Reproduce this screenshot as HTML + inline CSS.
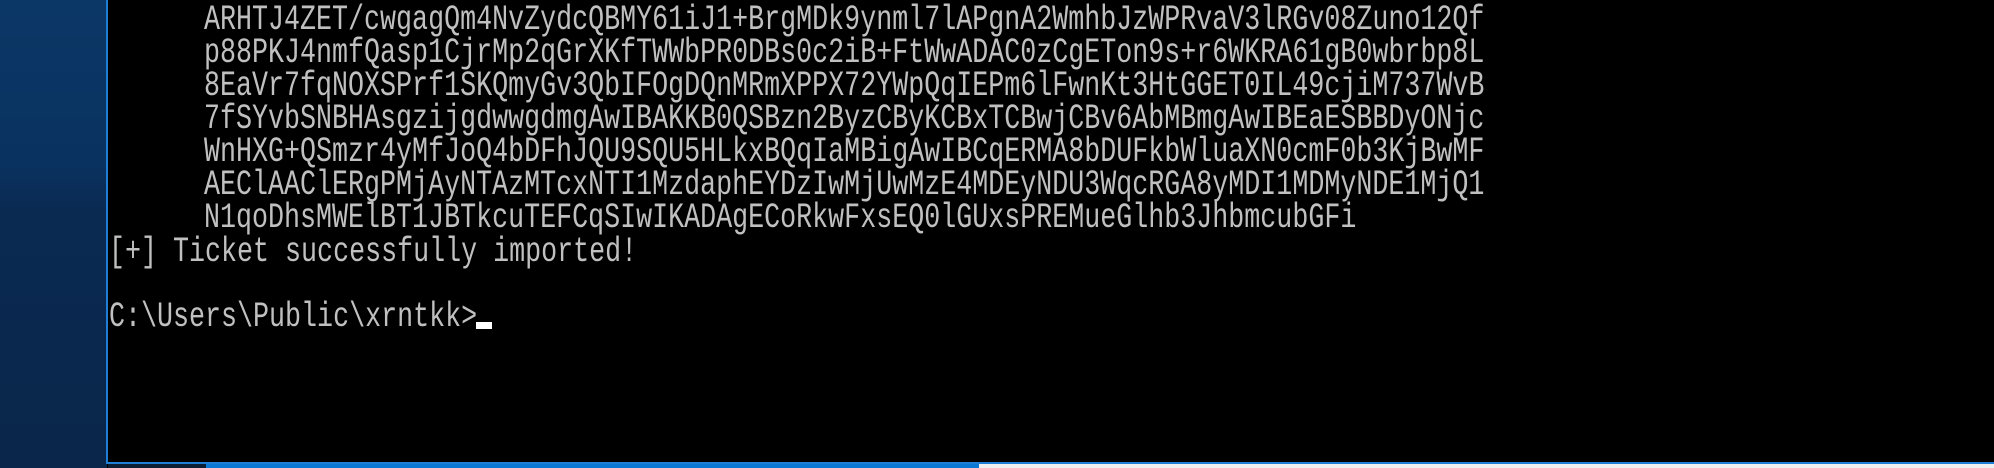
<!DOCTYPE html>
<html><head><meta charset="utf-8"><style>
html,body{margin:0;padding:0;}
body{width:1994px;height:468px;position:relative;overflow:hidden;background:#000;}
#desk{position:absolute;left:0;top:0;width:107px;height:468px;background:linear-gradient(180deg,#0b3766 0%,#0a3260 35%,#0a2a52 45%,#0a264a 100%);}
#win{position:absolute;left:106px;top:-2px;width:1890px;height:464px;background:#000;border-left:2px solid #1f7fd6;border-bottom:2px solid #1f7fd6;}
#strip1{position:absolute;left:108px;top:464px;width:98px;height:4px;background:#0b1e33;}
#strip2{position:absolute;left:206px;top:464px;width:773px;height:4px;background:#0a78d4;}
#strip3{position:absolute;left:979px;top:464px;width:1015px;height:4px;background:#f0f0f0;}
.l{position:absolute;white-space:pre;color:#c0c0c0;font-family:"Liberation Mono",monospace;font-size:35px;line-height:35px;transform:scaleX(0.762);transform-origin:0 0;}
#cur{position:absolute;left:476px;top:322px;width:16px;height:7px;background:#fff;}
</style></head><body>
<div id="desk"></div>
<div id="win"></div>
<div id="strip1"></div><div id="strip2"></div><div id="strip3"></div>
<div class="l" style="left:204px;top:3px">ARHTJ4ZET/cwgagQm4NvZydcQBMY61iJ1+BrgMDk9ynml7lAPgnA2WmhbJzWPRvaV3lRGv08Zuno12Qf</div>
<div class="l" style="left:204px;top:36px">p88PKJ4nmfQasp1CjrMp2qGrXKfTWWbPR0DBs0c2iB+FtWwADAC0zCgETon9s+r6WKRA61gB0wbrbp8L</div>
<div class="l" style="left:204px;top:69px">8EaVr7fqNOXSPrf1SKQmyGv3QbIFOgDQnMRmXPPX72YWpQqIEPm6lFwnKt3HtGGET0IL49cjiM737WvB</div>
<div class="l" style="left:204px;top:102px">7fSYvbSNBHAsgzijgdwwgdmgAwIBAKKB0QSBzn2ByzCByKCBxTCBwjCBv6AbMBmgAwIBEaESBBDyONjc</div>
<div class="l" style="left:204px;top:135px">WnHXG+QSmzr4yMfJoQ4bDFhJQU9SQU5HLkxBQqIaMBigAwIBCqERMA8bDUFkbWluaXN0cmF0b3KjBwMF</div>
<div class="l" style="left:204px;top:168px">AEClAAClERgPMjAyNTAzMTcxNTI1MzdaphEYDzIwMjUwMzE4MDEyNDU3WqcRGA8yMDI1MDMyNDE1MjQ1</div>
<div class="l" style="left:204px;top:201px">N1qoDhsMWElBT1JBTkcuTEFCqSIwIKADAgECoRkwFxsEQ0lGUxsPREMueGlhb3JhbmcubGFi</div>
<div class="l" style="left:109px;top:235px">[+] Ticket successfully imported!</div>
<div class="l" style="left:109px;top:300px">C:\Users\Public\xrntkk&gt;</div>
<div id="cur"></div>
</body></html>
